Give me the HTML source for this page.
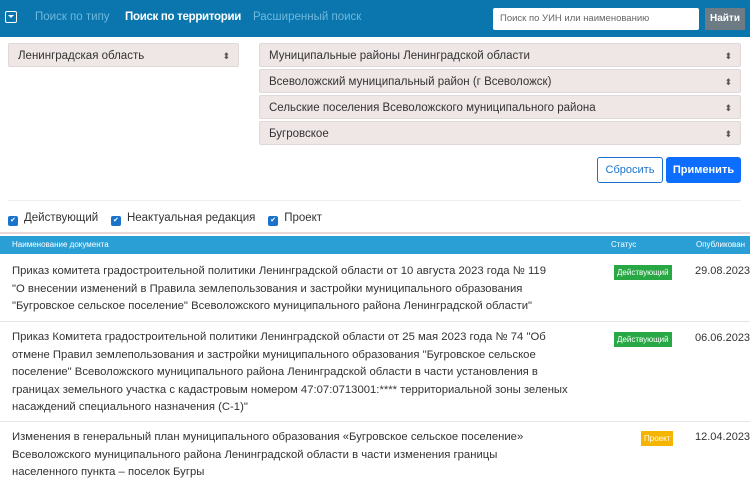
<!DOCTYPE html><html><head><style>
body{margin:0;width:750px;height:491px;overflow:hidden;font-family:"Liberation Sans","DejaVu Sans",sans-serif;background:#fff;color:#333;position:relative}
.a{position:absolute;white-space:nowrap}
.w{white-space:normal}
.hd{left:0;top:0;width:750px;height:37px;background:#0b76ad}
.sel{position:absolute;height:24px;background:#efe6e6;border:1px solid #e0d8d8;border-radius:2px;font-size:11.5px;line-height:24px;padding-left:9px;box-sizing:border-box;color:#333}
.sel:after{content:"⬍";position:absolute;right:8px;top:0;font-size:9px;color:#555}
.t{font-size:11.3px;line-height:17.5px;color:#333}
.badge{position:absolute;font-size:8px;color:#fff;padding:2px 3px;line-height:11px}
.cb{display:inline-block;width:10px;height:10px;background:#1a73c9;border-radius:2px;vertical-align:-1px;margin-right:6px;color:#fff;font-size:7px;line-height:10px;text-align:center}
</style></head><body>
<div class="a hd"></div>
<div class="a" style="left:5px;top:11px;width:12px;height:12px;border:1.5px solid #fff;box-sizing:border-box;border-radius:2px"><div style="position:absolute;left:2px;top:3px;border-left:3px solid transparent;border-right:3px solid transparent;border-top:3.5px solid #fff"></div></div>
<div class="a" style="left:35px;top:11px;font-size:11.5px;color:#6fb8de">Поиск по типу</div>
<div class="a" style="left:125px;top:11px;font-size:11.5px;color:#fff;font-weight:bold;letter-spacing:-0.3px">Поиск по территории</div>
<div class="a" style="left:253px;top:11px;font-size:11.5px;color:#6fb8de">Расширенный поиск</div>
<div class="a" style="left:493px;top:8px;width:206px;height:22px;background:#fff;border-radius:2px;font-size:9.5px;color:#666;line-height:22px;padding-left:7px;box-sizing:border-box">Поиск по УИН или наименованию</div>
<div class="a" style="left:705px;top:8px;width:40px;height:22px;background:#6d7b85;color:#fff;font-size:10px;font-weight:bold;line-height:22px;text-align:center">Найти</div>
<div class="sel" style="left:8px;top:43px;width:231px">Ленинградская область</div>
<div class="sel" style="left:259px;top:43px;width:482px">Муниципальные районы Ленинградской области</div>
<div class="sel" style="left:259px;top:69px;width:482px">Всеволожский муниципальный район (г Всеволожск)</div>
<div class="sel" style="left:259px;top:95px;width:482px">Сельские поселения Всеволожского муниципального района</div>
<div class="sel" style="left:259px;top:121px;width:482px">Бугровское</div>
<div class="a" style="left:597px;top:157px;width:66px;height:26px;border:1px solid #1a73c9;box-sizing:border-box;border-radius:3px;color:#1a73c9;font-size:11px;line-height:24px;text-align:center">Сбросить</div>
<div class="a" style="left:666px;top:157px;width:75px;height:26px;background:#0d6efd;border-radius:3px;color:#fff;font-size:11px;font-weight:bold;line-height:26px;text-align:center">Применить</div>
<div class="a" style="left:8px;top:200px;width:733px;height:1px;background:#eee"></div>
<div class="a" style="left:8px;top:212px;font-size:11.5px"><span class="cb">✔</span>Действующий&nbsp;&nbsp;&nbsp; <span class="cb">✔</span>Неактуальная редакция&nbsp;&nbsp;&nbsp; <span class="cb">✔</span>Проект</div>
<div class="a" style="left:0;top:232px;width:750px;height:2px;background:#e8d8d8"></div>
<div class="a" style="left:0;top:236px;width:750px;height:18px;background:#2a9fd6;color:#fff;font-size:8px;line-height:18px"><span class="a" style="left:12px">Наименование документа</span><span class="a" style="left:611px">Статус</span><span class="a" style="left:696px">Опубликован</span></div>
<div class="a t w" style="left:12px;top:263px;width:545px">Приказ комитета градостроительной политики Ленинградской области от 10 августа 2023 года № 119<br>"О внесении изменений в Правила землепользования и застройки муниципального образования "Бугровское сельское поселение" Всеволожского муниципального района Ленинградской области"</div>
<div class="badge" style="left:614px;top:265px;background:#28a745">Действующий</div>
<div class="a t" style="left:695px;top:263px;font-size:11px">29.08.2023</div>
<div class="a" style="left:0;top:321px;width:750px;height:1px;background:#e5e5e5"></div>
<div class="a t w" style="left:12px;top:329px;width:560px">Приказ Комитета градостроительной политики Ленинградской области от 25 мая 2023 года № 74 "Об отмене Правил землепользования и застройки муниципального образования "Бугровское сельское поселение" Всеволожского муниципального района Ленинградской области в части установления в границах земельного участка с кадастровым номером 47:07:0713001:**** территориальной зоны зеленых насаждений специального назначения (С-1)"</div>
<div class="badge" style="left:614px;top:332px;background:#28a745">Действующий</div>
<div class="a t" style="left:695px;top:330px;font-size:11px">06.06.2023</div>
<div class="a" style="left:0;top:421px;width:750px;height:1px;background:#e5e5e5"></div>
<div class="a t w" style="left:12px;top:429px;width:530px">Изменения в генеральный план муниципального образования «Бугровское сельское поселение» Всеволожского муниципального района Ленинградской области в части изменения границы населенного пункта – поселок Бугры</div>
<div class="badge" style="left:641px;top:431px;background:#f5b400">Проект</div>
<div class="a t" style="left:695px;top:429px;font-size:11px">12.04.2023</div>
</body></html>
